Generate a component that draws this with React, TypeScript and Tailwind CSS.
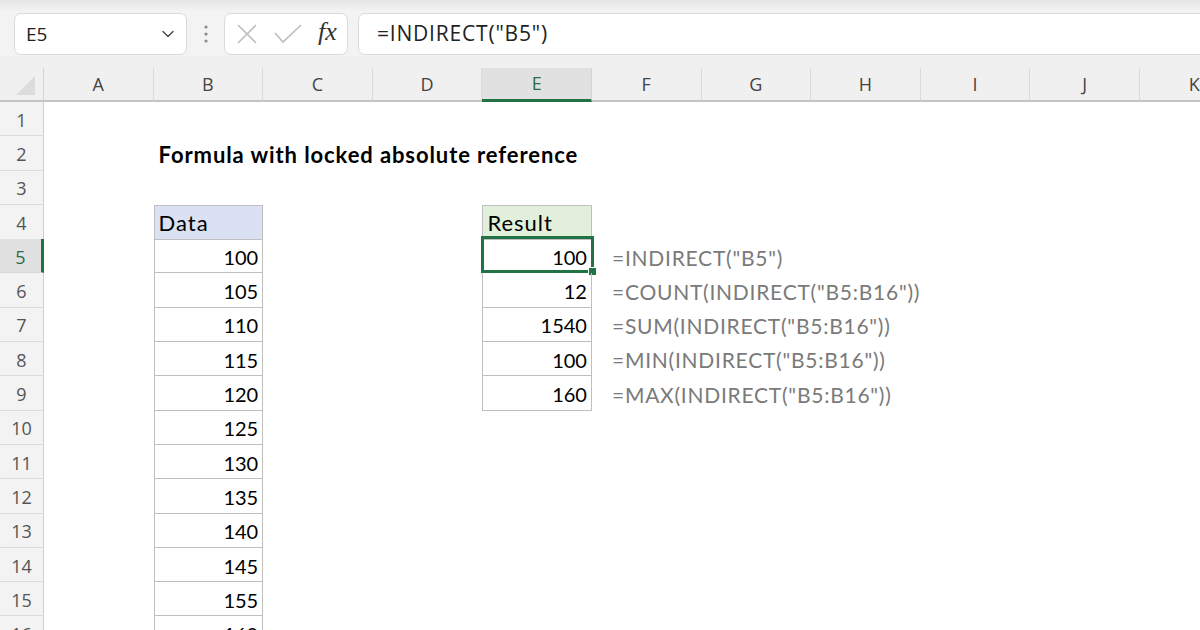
import { ChevronDown } from "lucide-react";

const COLS = ["A", "B", "C", "D", "E", "F", "G", "H", "I", "J", "K"];
const DATA = [100, 105, 110, 115, 120, 125, 130, 135, 140, 145, 155, 160];
const RESULTS = [
  { value: 100, formula: '=INDIRECT("B5")' },
  { value: 12, formula: '=COUNT(INDIRECT("B5:B16"))' },
  { value: 1540, formula: '=SUM(INDIRECT("B5:B16"))' },
  { value: 100, formula: '=MIN(INDIRECT("B5:B16"))' },
  { value: 160, formula: '=MAX(INDIRECT("B5:B16"))' },
];

const GRID = "grid grid-cols-[44px_repeat(11,109.6px)]";

function FormulaBar() {
  return (
    <div className="h-[56px] bg-[#f3f3f3] bg-gradient-to-b from-[#e6e6e6] via-[#f3f3f3] via-[20%] to-[#f3f3f3] pt-[13px] flex items-start [font-family:'Open_Sans','Noto_Sans',sans-serif]">
      <div className="ml-[14px] w-[173px] h-[42px] bg-white border border-[#dadada] rounded-[7px] flex items-center pl-[11px] pr-[8px]">
        <span className="text-[19px] text-[#222] flex-1">E5</span>
        <ChevronDown size={20} strokeWidth={1.6} className="text-[#444]" />
      </div>
      <div className="w-[37px] h-[42px] flex items-center justify-center">
        <svg width="4" height="20" viewBox="0 0 4 20">
          <circle cx="2" cy="3" r="1.6" fill="#8a8a8a" />
          <circle cx="2" cy="10" r="1.6" fill="#8a8a8a" />
          <circle cx="2" cy="17" r="1.6" fill="#8a8a8a" />
        </svg>
      </div>
      <div className="w-[124px] h-[42px] bg-white border border-[#dadada] rounded-[7px] flex items-center pl-[10px]">
        <svg width="22" height="20" viewBox="0 0 22 20" className="ml-[1px]">
          <path d="M2 1 L20 19 M20 1 L2 19" stroke="#bdbdbd" strokeWidth="1.6" fill="none" />
        </svg>
        <svg width="28" height="20" viewBox="0 0 28 20" className="ml-[16px]">
          <path d="M1 9 L9 18 L27 1" stroke="#bdbdbd" strokeWidth="1.6" fill="none" />
        </svg>
        <span className="ml-[16px] text-[26px] italic text-[#333] leading-none [font-family:'Liberation_Serif',serif] -mt-[4px]">
          fx
        </span>
      </div>
      <div className="ml-[10px] flex-1 -mr-[4px] h-[42px] bg-white border border-[#dadada] rounded-l-[7px] flex items-center pl-[18px]">
        <span className="text-[21px] tracking-[0.8px] text-[#222]">=INDIRECT("B5")</span>
      </div>
    </div>
  );
}

function ColumnHeaders() {
  return (
    <div className={`${GRID} h-[46px] bg-[#f0f0f0] pt-[12px] [font-family:'Open_Sans','Noto_Sans',sans-serif]`}>
      <div className="border-r border-[#d4d4d4] border-b-2 border-b-[#c4c4c4] relative">
        <svg width="20" height="20" viewBox="0 0 20 20" className="absolute right-[7px] bottom-[4px]">
          <path d="M19 0 L19 19 L0 19 Z" fill="#dcdcdc" />
        </svg>
      </div>
      {COLS.map((c) =>
        c === "E" ? (
          <div
            key={c}
            className="bg-[#e1e1e1] border-r border-[#d4d4d4] border-b-[3px] border-b-[#217346] flex items-center justify-center text-[18px] text-[#2f6b45]"
          >
            {c}
          </div>
        ) : (
          <div
            key={c}
            className="border-r border-[#dadada] border-b-2 border-b-[#c4c4c4] flex items-center justify-center text-[18px] text-[#444]"
          >
            {c}
          </div>
        )
      )}
    </div>
  );
}

function RowHeader({ n }: { n: number }) {
  const active = n === 5;
  return (
    <div
      className={
        active
          ? "bg-[#e1e1e1] border-r-[3px] border-r-[#217346] border-b border-b-[#d6d6d6] flex items-center justify-center pt-[3px] text-[18px] text-[#2f6b45] [font-family:'Open_Sans','Noto_Sans',sans-serif]"
          : "bg-[#f3f3f3] border-r border-r-[#cfcfcf] border-b border-b-[#dcdcdc] flex items-center justify-center pt-[3px] text-[18px] text-[#555] [font-family:'Open_Sans','Noto_Sans',sans-serif]"
      }
    >
      {n}
    </div>
  );
}

export default function App() {
  const rows = Array.from({ length: 16 }, (_, i) => i + 1);

  return (
    <div className="w-[1200px] h-[630px] overflow-hidden bg-white">
      <FormulaBar />
      <ColumnHeaders />
      <div className="[font-family:Lato,'Liberation_Sans',sans-serif] text-[20px] text-black">
        {rows.map((n) => {
          const idx = n - 5;
          const res = idx >= 0 && idx < RESULTS.length ? RESULTS[idx] : null;
          return (
            <div key={n} className={`${GRID} h-[34.3px]`}>
              <RowHeader n={n} />
              {/* A */}
              <div />
              {/* B */}
              {n === 2 ? (
                <div className="flex items-center pt-[2px] pl-[5px] text-[22px] tracking-[0.9px] font-bold whitespace-nowrap">
                  Formula with locked absolute reference
                </div>
              ) : n === 4 ? (
                <div className="bg-[#d9e1f2] border border-[#bfbfbf] flex items-center pl-[4px] text-[22px] tracking-[1px]">
                  Data
                </div>
              ) : idx >= 0 ? (
                <div className="border-x border-b border-[#bfbfbf] flex items-center justify-end pt-[2px] pr-[4px]">
                  {DATA[idx]}
                </div>
              ) : (
                <div />
              )}
              {/* C, D */}
              <div />
              <div />
              {/* E */}
              {n === 4 ? (
                <div className="bg-[#e2efda] border border-[#bfbfbf] flex items-center pl-[4px] text-[22px] tracking-[1px]">
                  Result
                </div>
              ) : res ? (
                <div className="relative border-x border-b border-[#bfbfbf] flex items-center justify-end pt-[2px] pr-[4px]">
                  {res.value}
                  {n === 5 && (
                    <>
                      <div className="absolute -left-[2px] -top-[3px] -right-[3px] -bottom-[1px] border-[3px] border-[#217346]" />
                      <div className="absolute -right-[6px] -bottom-[4px] w-[9px] h-[9px] bg-[#217346] border border-white" />
                    </>
                  )}
                </div>
              ) : (
                <div />
              )}
              {/* F */}
              {res ? (
                <div className="flex items-center pt-[2px] pl-[20px] whitespace-nowrap text-[21px] tracking-[0.75px] text-[#7a7a7a]">
                  {res.formula}
                </div>
              ) : (
                <div />
              )}
              <div />
              <div />
              <div />
              <div />
              <div />
            </div>
          );
        })}
      </div>
    </div>
  );
}
